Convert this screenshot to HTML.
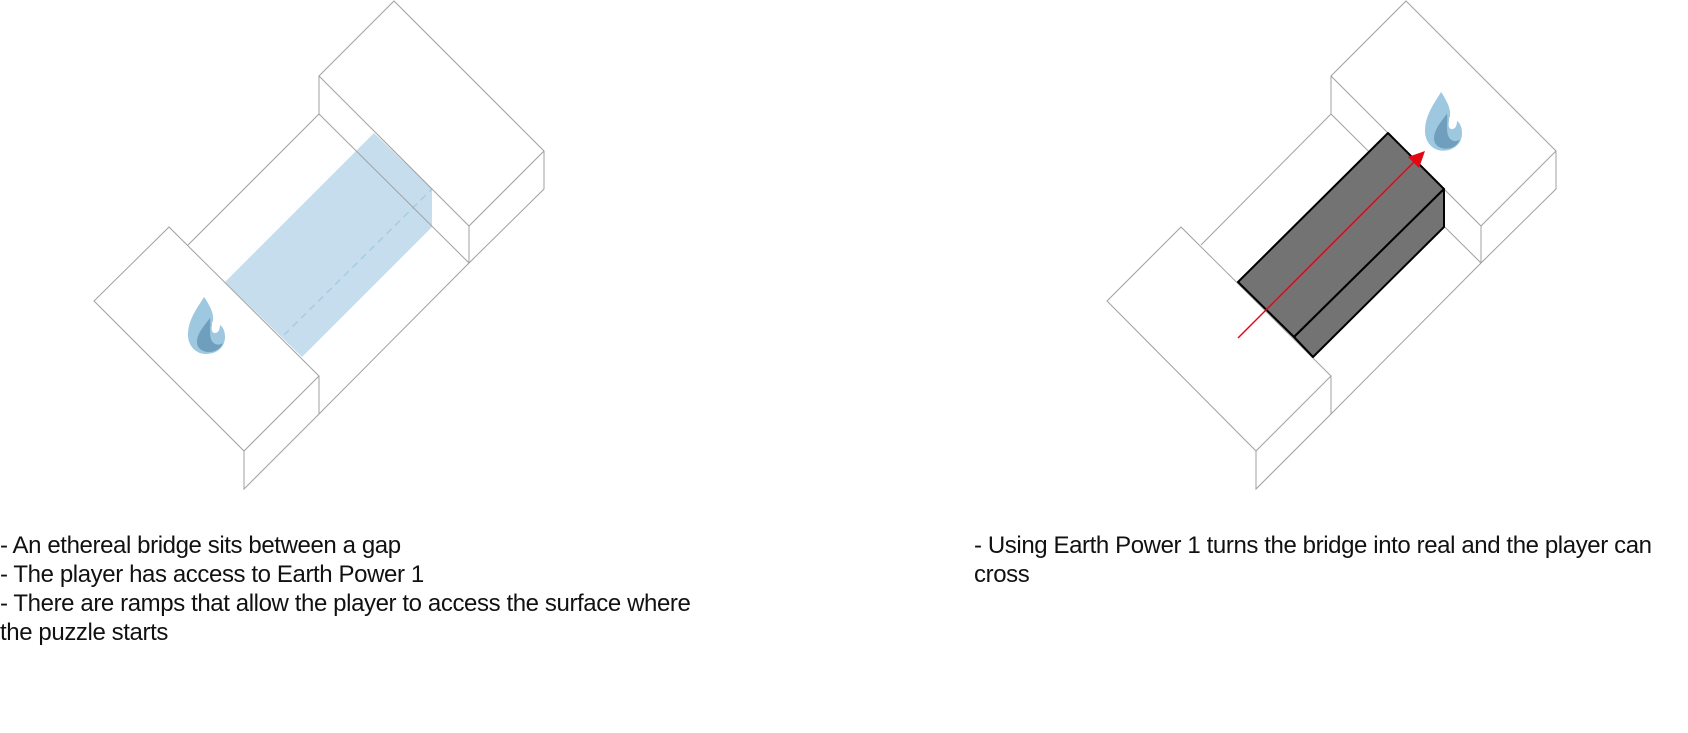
<!DOCTYPE html>
<html><head><meta charset="utf-8"><style>
html,body{margin:0;padding:0;background:#fff;width:1688px;height:733px;overflow:hidden;}
svg{position:absolute;left:0;top:0;}
.t{position:absolute;font-family:"Liberation Sans",sans-serif;font-size:24px;line-height:29px;color:#111;letter-spacing:-0.4px;white-space:nowrap;}
</style></head><body>
<svg width="1688" height="733" viewBox="0 0 1688 733">
<defs>
<g id="flame">
<path d="M16 0 C22 9 26 16 25 24 C20 30 12 34 12 30 Z" fill="#9ec8e0"/>
<path d="M16 0 C10 10 0 22 0 38 C0 49 8 57 18 57 C29 57 37 50 37 40 C37 34 35 30 32 28 C32 33 30 36 27 36 C24 36 23 33 24 28 C25 18 22 8 16 0Z" fill="#9ec8e0"/>
<path d="M22 21 C15 30 9 37 9 45 C9 51 14 55 21 55 C28 55 33 51 35 46 C31 49 25 48 23 42 C21 36 23 28 22 21Z" fill="#6f9fbd"/>
</g>
</defs>
<g fill="none" stroke="#a0a0a0" stroke-width="1">
<polygon points="225,282 374,133 432,189 432,227 302,357" fill="#c6dded" stroke="none"/>
<line x1="284" y1="335" x2="432" y2="189" stroke="#a6cde3" stroke-width="1.5" stroke-dasharray="7,5"/>
<polygon points="169,227 94,301 244,451 319,376"/>
<path d="M244,451 V489 L319,414 V376"/>
<path d="M188,245 L319,114 L469,263 M319,414 L469,263"/>
<polygon points="319,76 394,1 544,151 469,226"/>
<path d="M319,76 V114 M469,226 V263 L544,189 V151"/>
<polygon points="1181,227 1107,301 1256,451 1331,376"/>
<path d="M1256,451 V489 L1331,414 V376"/>
<path d="M1201,245 L1331,114 L1481,263 M1331,414 L1481,263"/>
<polygon points="1331,76 1406,1 1556,151 1481,226"/>
<path d="M1331,76 V114 M1481,226 V263 L1556,189 V151"/>
</g>
<use href="#flame" transform="translate(188,297)"/>
<use href="#flame" transform="translate(1425,92) scale(1,1.03)"/>
<g stroke="#000" stroke-width="2" stroke-linejoin="round" fill="#737373">
<polygon points="1238,282 1388,133 1444,189 1294,337"/>
<polygon points="1294,337 1444,189 1444,227 1313,357"/>
</g>
<line x1="1238" y1="338" x2="1416" y2="160" stroke="#e30613" stroke-width="1.5"/>
<polygon points="1425,151 1408,157 1419,168" fill="#e30613"/>
</svg>
<div class="t" style="left:0;top:531px;">- An ethereal bridge sits between a gap<br>- The player has access to Earth Power 1<br>- There are ramps that allow the player to access the surface where<br>the puzzle starts</div>
<div class="t" style="left:974px;top:531px;">- Using Earth Power 1 turns the bridge into real and the player can<br>cross</div>
</body></html>
